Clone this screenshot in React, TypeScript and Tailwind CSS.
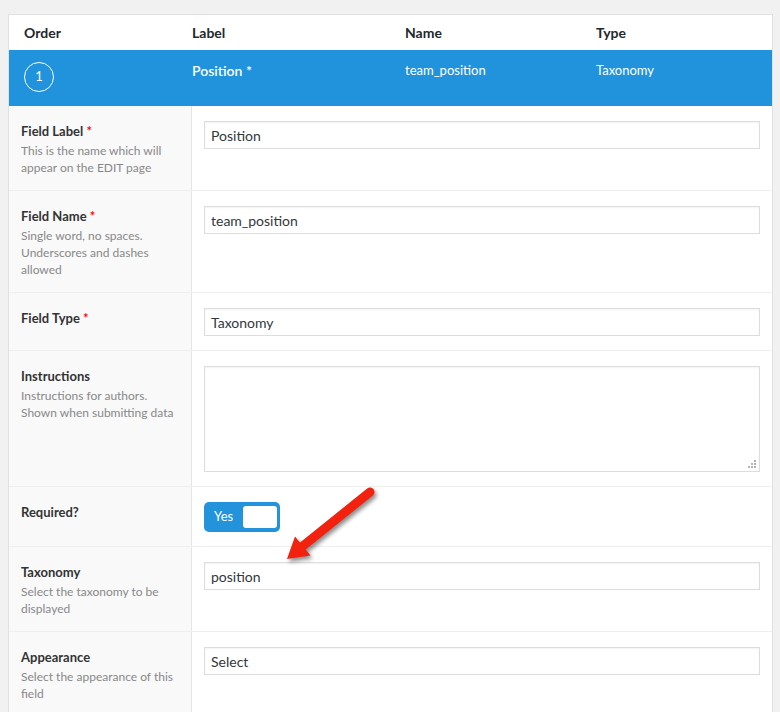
import { ReactNode } from 'react';

const font = { fontFamily: 'Lato, "Liberation Sans", sans-serif' };

type Field = {
  label: string;
  required?: boolean;
  hint?: string;
  control: ReactNode;
};

function TextInput({ value }: { value: string }) {
  return (
    <div className="flex h-[28px] items-center border border-[#dddddd] bg-white px-[6px] text-[14px] text-[#32373c] shadow-[inset_0_1px_2px_rgba(0,0,0,0.05)]">
      {value}
    </div>
  );
}

function TextArea() {
  return (
    <div className="relative h-[106px] border border-[#dddddd] bg-white shadow-[inset_0_1px_2px_rgba(0,0,0,0.05)]">
      <svg className="absolute right-[3px] bottom-[3px]" width="8" height="8" viewBox="0 0 8 8" fill="#b5b5b5">
        <rect x="6" y="0" width="2" height="2" />
        <rect x="3" y="3" width="2" height="2" />
        <rect x="6" y="3" width="2" height="2" />
        <rect x="0" y="6" width="2" height="2" />
        <rect x="3" y="6" width="2" height="2" />
        <rect x="6" y="6" width="2" height="2" />
      </svg>
    </div>
  );
}

function Toggle() {
  return (
    <div className="flex h-[30px] w-[76px] items-center justify-between rounded-[5px] bg-[#2393dc] pr-[3px] pl-[10px]">
      <span className="text-[13px] text-white">Yes</span>
      <span className="h-[22px] w-[34px] rounded-[3px] bg-white" />
    </div>
  );
}

const fields: Field[] = [
  {
    label: 'Field Label',
    required: true,
    hint: 'This is the name which will appear on the EDIT page',
    control: <TextInput value="Position" />,
  },
  {
    label: 'Field Name',
    required: true,
    hint: 'Single word, no spaces. Underscores and dashes allowed',
    control: <TextInput value="team_position" />,
  },
  { label: 'Field Type', required: true, control: <TextInput value="Taxonomy" /> },
  {
    label: 'Instructions',
    hint: 'Instructions for authors. Shown when submitting data',
    control: <TextArea />,
  },
  { label: 'Required?', control: <Toggle /> },
  {
    label: 'Taxonomy',
    hint: 'Select the taxonomy to be displayed',
    control: <TextInput value="position" />,
  },
  {
    label: 'Appearance',
    hint: 'Select the appearance of this field',
    control: <TextInput value="Select" />,
  },
];

function FieldRow({ field }: { field: Field }) {
  return (
    <div className="flex border-b border-[#eeeeee]">
      <div className="w-[183px] shrink-0 border-r border-[#e5e5e5] bg-[#f9f9fa] pt-[15px] pr-[8px] pb-[14px] pl-[12px]">
        <div className="text-[13px] leading-[20px] font-bold text-[#333333]">
          {field.label}
          {field.required && <span className="text-[#ee1111]"> *</span>}
        </div>
        {field.hint && <p className="mt-[1px] text-[12px] leading-[17px] text-[#888888]">{field.hint}</p>}
      </div>
      <div className="flex-1 bg-white pt-[15px] pr-[12px] pb-[14px] pl-[12px]">{field.control}</div>
    </div>
  );
}

export default function App() {
  return (
    <div className="relative min-h-[712px] bg-[#f1f1f1] pt-[14px] pr-[7px] pl-[8px]" style={font}>
      <div className="border border-[#e1e1e1] bg-white">
        <div className="flex h-[35px] items-center text-[14px] font-bold text-[#23282d]">
          <div className="w-[183px] pl-[15px]">Order</div>
          <div className="w-[213px]">Label</div>
          <div className="w-[191px]">Name</div>
          <div className="flex-1">Type</div>
        </div>
        <div className="flex h-[56px] bg-[#2193dd] pt-[10px] text-[13px] text-white">
          <div className="w-[183px] pt-[2px] pl-[15px]">
            <div className="flex h-[30px] w-[30px] items-center justify-center rounded-full border border-white text-[13px]">
              1
            </div>
          </div>
          <div className="w-[213px] text-[14px] font-semibold">Position *</div>
          <div className="w-[191px] pt-[1px]">team_position</div>
          <div className="flex-1 pt-[1px]">Taxonomy</div>
        </div>
        {fields.map((field) => (
          <FieldRow key={field.label} field={field} />
        ))}
      </div>

      {/* red pointer arrow */}
      <svg
        className="absolute top-[484px] left-[280px] drop-shadow-[2px_3px_2px_rgba(0,0,0,0.45)]"
        width="100"
        height="84"
        viewBox="0 0 100 84"
      >
        <line x1="90" y1="8" x2="21" y2="63.5" stroke="#f2220f" strokeWidth="9" strokeLinecap="round" />
        <polygon points="7,75 15,52.5 30.5,71.5" fill="#f2220f" />
      </svg>
    </div>
  );
}
